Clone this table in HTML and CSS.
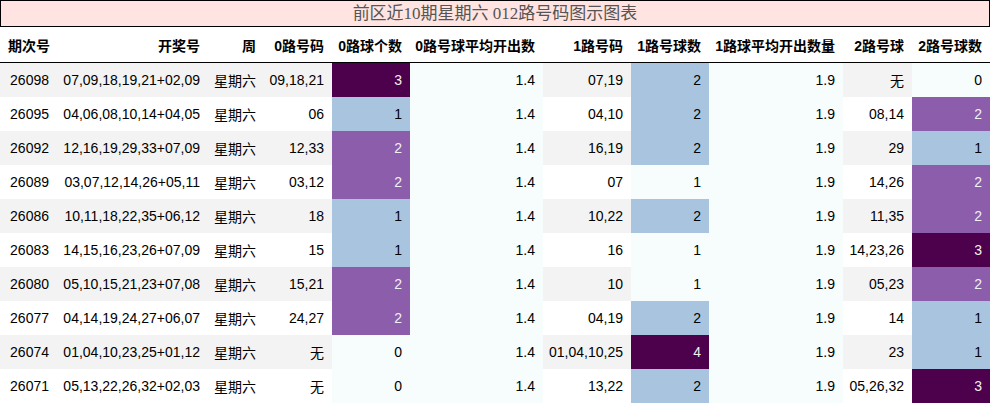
FILE: index.html
```html
<!DOCTYPE html>
<html lang="zh">
<head>
<meta charset="utf-8">
<title>012路号码图示图表</title>
<link rel="stylesheet" href="styles.css">
</head>
<body>
<table class="chart">
  <caption class="chart-title">前区近10期星期六 012路号码图示图表</caption>
  <colgroup>
    <col class="w-issue"><col class="w-draw"><col class="w-week"><col class="w-r0"><col class="w-cnt">
    <col class="w-avg"><col class="w-r1"><col class="w-cnt"><col class="w-avg2"><col class="w-r2"><col class="w-cnt">
  </colgroup>
  <thead>
    <tr>
      <th class="left">期次号</th><th>开奖号</th><th>周</th><th>0路号码</th><th>0路球个数</th><th>0路号球平均开出数</th><th>1路号码</th><th>1路号球数</th><th>1路球平均开出数量</th><th>2路号球</th><th>2路号球数</th>
    </tr>
  </thead>
  <tbody>
    <tr class="odd"><td>26098</td><td>07,09,18,19,21+02,09</td><td>星期六</td><td>09,18,21</td><td class="h3">3</td><td class="h0">1.4</td><td>07,19</td><td class="h1">2</td><td class="h0">1.9</td><td>无</td><td class="h0">0</td></tr>
    <tr><td>26095</td><td>04,06,08,10,14+04,05</td><td>星期六</td><td>06</td><td class="h1">1</td><td class="h0">1.4</td><td>04,10</td><td class="h1">2</td><td class="h0">1.9</td><td>08,14</td><td class="h2">2</td></tr>
    <tr class="odd"><td>26092</td><td>12,16,19,29,33+07,09</td><td>星期六</td><td>12,33</td><td class="h2">2</td><td class="h0">1.4</td><td>16,19</td><td class="h1">2</td><td class="h0">1.9</td><td>29</td><td class="h1">1</td></tr>
    <tr><td>26089</td><td>03,07,12,14,26+05,11</td><td>星期六</td><td>03,12</td><td class="h2">2</td><td class="h0">1.4</td><td>07</td><td class="h0">1</td><td class="h0">1.9</td><td>14,26</td><td class="h2">2</td></tr>
    <tr class="odd"><td>26086</td><td>10,11,18,22,35+06,12</td><td>星期六</td><td>18</td><td class="h1">1</td><td class="h0">1.4</td><td>10,22</td><td class="h1">2</td><td class="h0">1.9</td><td>11,35</td><td class="h2">2</td></tr>
    <tr><td>26083</td><td>14,15,16,23,26+07,09</td><td>星期六</td><td>15</td><td class="h1">1</td><td class="h0">1.4</td><td>16</td><td class="h0">1</td><td class="h0">1.9</td><td>14,23,26</td><td class="h3">3</td></tr>
    <tr class="odd"><td>26080</td><td>05,10,15,21,23+07,08</td><td>星期六</td><td>15,21</td><td class="h2">2</td><td class="h0">1.4</td><td>10</td><td class="h0">1</td><td class="h0">1.9</td><td>05,23</td><td class="h2">2</td></tr>
    <tr><td>26077</td><td>04,14,19,24,27+06,07</td><td>星期六</td><td>24,27</td><td class="h2">2</td><td class="h0">1.4</td><td>04,19</td><td class="h1">2</td><td class="h0">1.9</td><td>14</td><td class="h1">1</td></tr>
    <tr class="odd"><td>26074</td><td>01,04,10,23,25+01,12</td><td>星期六</td><td>无</td><td class="h0">0</td><td class="h0">1.4</td><td>01,04,10,25</td><td class="h3">4</td><td class="h0">1.9</td><td>23</td><td class="h1">1</td></tr>
    <tr><td>26071</td><td>05,13,22,26,32+02,03</td><td>星期六</td><td>无</td><td class="h0">0</td><td class="h0">1.4</td><td>13,22</td><td class="h1">2</td><td class="h0">1.9</td><td>05,26,32</td><td class="h3">3</td></tr>
  </tbody>
</table>
</body>
</html>
```

FILE: styles.css
```css
html, body {
  margin: 0;
  padding: 0;
  background: #ffffff;
}

.chart {
  width: 990px;
  table-layout: fixed;
  border-collapse: separate;
  border-spacing: 0;
  font-family: "Liberation Sans", "Noto Sans CJK SC", sans-serif;
  font-size: 14px;
  color: #000000;
}

.chart-title {
  caption-side: top;
  box-sizing: border-box;
  height: 27px;
  line-height: 25px;
  border: 1px solid #000000;
  background: #ffe4e1;
  color: #555555;
  font-family: "Liberation Serif", "Noto Sans CJK SC", serif;
  font-size: 17px;
  text-align: center;
  padding: 0;
}

.w-issue { width: 57px; }
.w-draw { width: 151px; }
.w-week { width: 56px; }
.w-r0 { width: 68px; }
.w-cnt { width: 78px; }
.w-avg { width: 133px; }
.w-r1 { width: 88px; }
.w-avg2 { width: 134px; }
.w-r2 { width: 69px; }

.chart th {
  height: 35px;
  padding: 0 8px 0 0;
  font-weight: bold;
  text-align: right;
  border-bottom: 1px solid #000000;
  white-space: nowrap;
  vertical-align: middle;
}

.chart th.left {
  text-align: left;
  padding: 0 0 0 8px;
}

.chart td {
  height: 34px;
  padding: 0 8px 0 0;
  text-align: right;
  white-space: nowrap;
  vertical-align: middle;
}

.chart tr.odd td {
  background: #f3f3f3;
}

.chart td.h0,
.chart tr.odd td.h0 {
  background: #f7fcfd;
  color: #000000;
}

.chart td.h1,
.chart tr.odd td.h1 {
  background: #a9c4de;
  color: #000000;
}

.chart td.h2,
.chart tr.odd td.h2 {
  background: #8b5daa;
  color: #f1f1f1;
}

.chart td.h3,
.chart tr.odd td.h3 {
  background: #4d004b;
  color: #f1f1f1;
}
```
